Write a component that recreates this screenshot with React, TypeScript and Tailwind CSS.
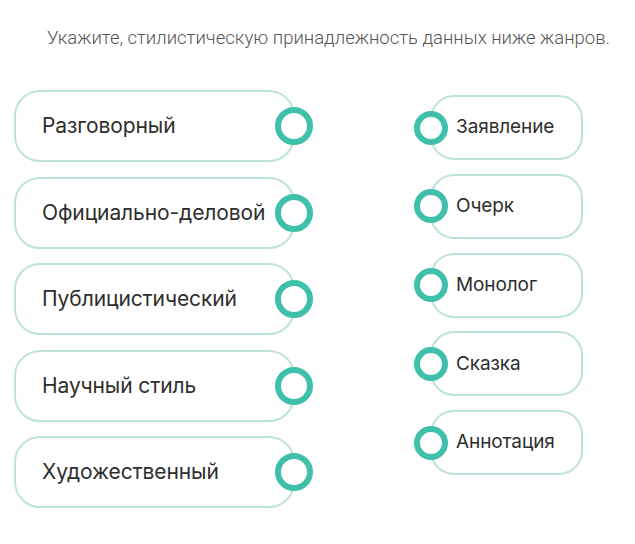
const leftItems = [
  "Разговорный",
  "Официально-деловой",
  "Публицистический",
  "Научный стиль",
  "Художественный",
];

const rightItems = ["Заявление", "Очерк", "Монолог", "Сказка", "Аннотация"];

function Dot({ className }: { className: string }) {
  return (
    <span
      className={`absolute top-1/2 -translate-y-1/2 rounded-full border-[6px] border-[#3ec0ab] bg-white ${className}`}
    />
  );
}

export default function App() {
  return (
    <div className="w-[635px] h-[544px] bg-white overflow-hidden font-['Inter',sans-serif]">
      <p className="pt-[25px] pl-[47px] text-[18.5px] font-light text-[#555] font-['Roboto',sans-serif] leading-[26px]">
        Укажите, стилистическую принадлежность данных ниже жанров.
      </p>

      <div className="flex mt-[39px]">
        {/* левый столбец */}
        <div className="flex flex-col gap-[14.5px] ml-[14px] w-[281px]">
          {leftItems.map((item) => (
            <div
              key={item}
              className="relative h-[72px] rounded-[26px] border-2 border-[#bfe2dc] flex items-center pl-[26px]"
            >
              <span className="text-[21px] text-[#2e2e2e] tracking-[-0.1px]">{item}</span>
              <Dot className="-right-[20px] w-[38px] h-[38px]" />
            </div>
          ))}
        </div>

        {/* правый столбец */}
        <div className="flex flex-col gap-[13.75px] ml-[135px] mt-[5px] w-[153px]">
          {rightItems.map((item) => (
            <div
              key={item}
              className="relative h-[65px] rounded-[24px] border-2 border-[#bfe2dc] flex items-center pl-[24px]"
            >
              <span className="text-[19px] text-[#2e2e2e] tracking-[-0.1px]">{item}</span>
              <Dot className="-left-[18px] w-[34px] h-[34px]" />
            </div>
          ))}
        </div>
      </div>
    </div>
  );
}
